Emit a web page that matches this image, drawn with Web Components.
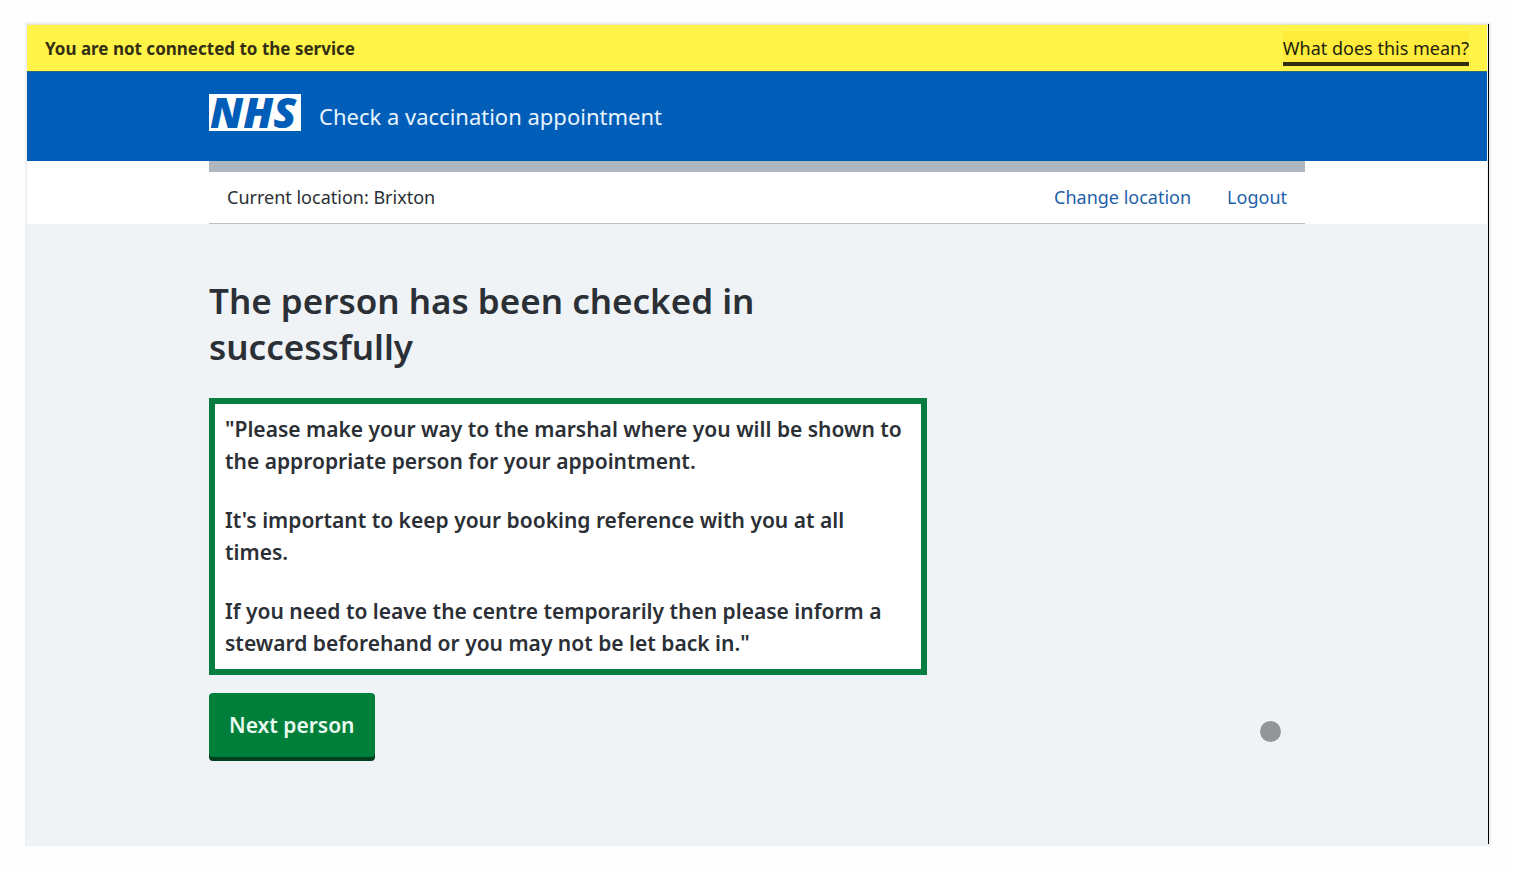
<!DOCTYPE html>
<html lang="en">
<head>
<meta charset="utf-8">
<meta name="viewport" content="width=device-width, initial-scale=1">
<title>Check a vaccination appointment</title>
<style>
  body { margin: 0; background: #fefefe; color: #2b2f36; font-family: "Noto Sans", "Open Sans", sans-serif; }
</style>
</head>
<body>
<app-frame>
  <connection-banner href="#offline-help" link-text="What does this mean?">You are not connected to the service</connection-banner>
  <service-header>Check a vaccination appointment</service-header>
  <location-bar>Current location: Brixton</location-bar>
  <check-in-result>
    <span slot="title">The person has been checked in successfully</span>
    <message-card slot="message">
      <p>"Please make your way to the marshal where you will be shown to the appropriate person for your appointment.</p>
      <p>It's important to keep your booking reference with you at all times.</p>
      <p>If you need to leave the centre temporarily then please inform a steward beforehand or you may not be let back in."</p>
    </message-card>
    <action-button slot="action">Next person</action-button>
  </check-in-result>
  <touch-pointer></touch-pointer>
</app-frame>
<script>
  const define = (name, html) => {
    customElements.define(name, class extends HTMLElement {
      constructor() {
        super();
        this.attachShadow({ mode: 'open' }).innerHTML = html;
      }
    });
  };

  define('app-frame', `
    <style>
      :host { display: flex; position: relative; box-sizing: border-box; min-height: calc(100vh - 46px);
        margin: 22px 23px 24px 25px; border: 2px solid #edf1f4; background: #eff3f6; }
      .screen { flex: 1; min-width: 0; display: flex; flex-direction: column; border-right: 1px solid #000; padding-right: 1px; }
    </style>
    <div class="screen"><slot></slot></div>`);

  customElements.define('connection-banner', class extends HTMLElement {
    connectedCallback() {
      if (this.shadowRoot) return;
      this.attachShadow({ mode: 'open' }).innerHTML = `
        <style>
          :host { display: flex; align-items: center; justify-content: space-between; gap: 18px; box-sizing: border-box;
            min-height: 48px; padding: 0 18px; background: #fff447; color: #332f12; line-height: 27px;
            border-top: 1px solid #e6e4c8; border-bottom: 1px solid #2b6a78; }
          strong { font-size: 17px; font-weight: 700; }
          a { font-size: 18px; color: #231f0c; background: #ffec3d; text-decoration: none; padding-top: 4px; border-bottom: 4px solid #332d10; }
        </style>
        <strong><slot></slot></strong>
        <a></a>`;
      const link = this.shadowRoot.querySelector('a');
      link.href = this.getAttribute('href');
      link.textContent = this.getAttribute('link-text');
    }
  });

  define('nhs-logo', `
    <style>
      :host { display: block; width: 92px; height: 37px; }
      svg { display: block; overflow: visible; }
      text { font: italic 800 42px "Open Sans", sans-serif; fill: #005eb8; }
    </style>
    <svg width="92" height="37" viewBox="0 0 92 37" role="img" aria-label="NHS">
      <rect width="92" height="37" fill="#fff"/>
      <text x="1" y="34">NHS</text>
    </svg>`);

  define('service-header', `
    <style>
      :host { display: block; background: #005eb8; color: #e8f4ff; }
      .inner { display: flex; align-items: flex-start; gap: 18px; box-sizing: border-box; max-width: 1096px; min-height: 89px;
        margin: 0 auto; padding-top: 22px; }
      .name { font-size: 22px; line-height: 30px; padding-top: 7px; }
    </style>
    <header class="inner"><nhs-logo></nhs-logo><span class="name"><slot></slot></span></header>`);

  define('location-bar', `
    <style>
      :host { display: block; background: #fff; font-size: 18px; line-height: 27px; }
      .inner { display: flex; justify-content: space-between; align-items: center; gap: 36px; box-sizing: border-box;
        max-width: 1096px; min-height: 63px; margin: 0 auto; padding: 0 18px; border-top: 11px solid #aeb7bf; border-bottom: 1px solid #b9c0c7; }
      nav { display: flex; gap: 36px; }
      a { color: #1f5fa8; text-decoration: none; }
    </style>
    <div class="inner">
      <span><slot></slot></span>
      <nav><a href="#change-location">Change location</a><a href="#logout">Logout</a></nav>
    </div>`);

  define('check-in-result', `
    <style>
      :host { display: block; }
      main { max-width: 1096px; margin: 0 auto; padding: 54px 0; }
      .column { max-width: 718px; display: flex; flex-direction: column; align-items: flex-start; }
      h1 { margin: 0 0 28px; max-width: 640px; font-size: 35px; line-height: 46px; font-weight: 600; }
      ::slotted(message-card) { margin-bottom: 18px; }
    </style>
    <main>
      <div class="column">
        <h1><slot name="title"></slot></h1>
        <slot name="message"></slot>
        <slot name="action"></slot>
      </div>
    </main>`);

  define('message-card', `
    <style>
      :host { display: flex; flex-direction: column; gap: 27px; box-sizing: border-box; width: 100%;
        padding: 9px 10px 10px; border: 6px solid #077d40; background: #fff; font-size: 21px; line-height: 32px; font-weight: 600; }
      ::slotted(p) { margin: 0; }
    </style>
    <slot></slot>`);

  define('action-button', `
    <style>
      :host { display: block; }
      button { display: block; margin: 0 0 4px; padding: 16px 20px; border: 0; border-radius: 4px; background: #007f3b;
        box-shadow: 0 4px 0 #00401e; color: #e9fbf0; font: inherit; font-size: 21px; line-height: 32px; font-weight: 600; cursor: pointer; }
    </style>
    <button type="button"><slot></slot></button>`);

  define('touch-pointer', `
    <style>
      :host { position: absolute; right: 208px; bottom: 102px; width: 21px; height: 21px; border-radius: 50%; background: #949599; box-shadow: 0 0 0 1px #f3f4f7; }
    </style>`);
</script>
</body>
</html>
